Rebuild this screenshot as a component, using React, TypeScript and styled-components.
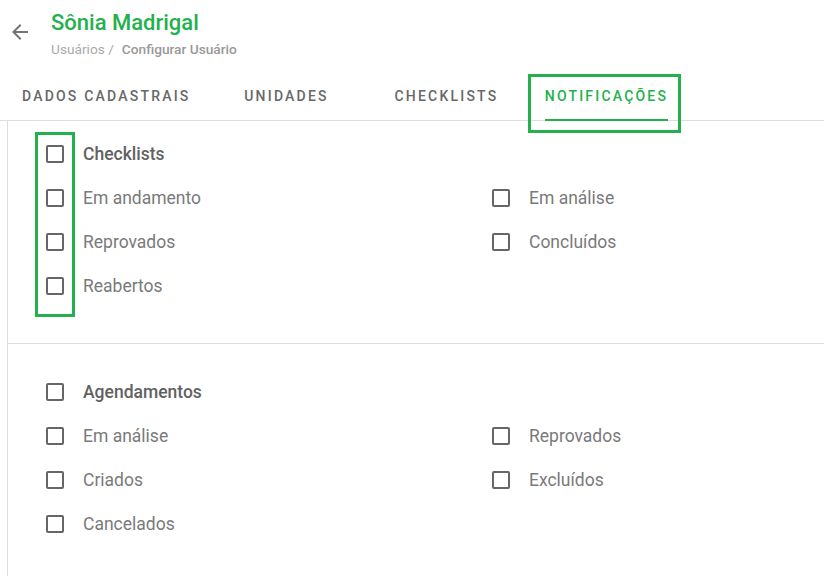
import React from 'react';
import styled, { createGlobalStyle } from 'styled-components';

const GREEN = '#22b14c';

const GlobalStyle = createGlobalStyle`
  body {
    margin: 0;
    background: #fff;
    font-family: Roboto, 'Liberation Sans', sans-serif;
  }
`;

const Page = styled.div`
  width: 824px;
  height: 578px;
  overflow: hidden;
  background: #fff;
`;

const Header = styled.header`
  display: flex;
  align-items: flex-start;
  height: 72px;
  padding: 10px 0 0 8px;
  box-sizing: border-box;
`;

const BackButton = styled.button`
  display: flex;
  align-items: center;
  justify-content: center;
  width: 24px;
  height: 24px;
  padding: 0;
  margin-top: 10px;
  border: none;
  background: none;
  color: #757575;
  cursor: pointer;
`;

const TitleBlock = styled.div`
  display: flex;
  flex-direction: column;
  margin-left: 19px;
`;

const Title = styled.h1`
  margin: 0;
  font-size: 22px;
  font-weight: 500;
  line-height: 26px;
  color: ${GREEN};
`;

const Crumbs = styled.div`
  margin-top: 5px;
  font-size: 13.7px;
  line-height: 16px;
  color: #aaa;
`;

const CrumbCurrent = styled.span`
  margin-left: 8px;
  color: #999;
  font-weight: 500;
`;

const TabBar = styled.nav`
  display: flex;
  height: 48px;
  border-bottom: 1px solid #ddd;
`;

const Tab = styled.div<{ $active?: boolean }>`
  position: relative;
  display: flex;
  align-items: flex-start;
  justify-content: center;
  width: 160px;
  box-sizing: border-box;
  font-size: 14px;
  font-weight: 500;
  letter-spacing: 2.2px;
  color: ${(p) => (p.$active ? GREEN : '#686868')};

  &:first-child {
    width: auto;
    padding: 0 16px 0 22px;
  }
`;

const TabLabel = styled.span<{ $active?: boolean }>`
  display: flex;
  align-items: center;
  height: calc(100% + 1px);
  padding-top: 1px;
  border-bottom: 2px solid ${(p) => (p.$active ? GREEN : 'transparent')};
  box-sizing: border-box;
`;

const Highlight = styled.div`
  position: absolute;
  border: 3px solid ${GREEN};
  box-sizing: border-box;
  pointer-events: none;
`;

const Panel = styled.main`
  margin-left: 7px;
  border-left: 1px solid #ddd;
`;

const Section = styled.section<{ $top: number; $bottom: number; $divider?: boolean }>`
  position: relative;
  display: grid;
  grid-template-columns: 446px 1fr;
  padding: ${(p) => p.$top}px 0 ${(p) => p.$bottom}px 38px;
  border-bottom: ${(p) => (p.$divider ? '1px solid #ddd' : 'none')};
`;

const Option = styled.label<{ $heading?: boolean }>`
  display: flex;
  align-items: center;
  gap: 19px;
  height: 44px;
  font-size: 17.5px;
  font-weight: ${(p) => (p.$heading ? 500 : 400)};
  color: ${(p) => (p.$heading ? '#616161' : '#7a7a7a')};
  grid-column: ${(p) => (p.$heading ? '1 / span 2' : 'auto')};
`;

const Box = styled.span`
  width: 18px;
  height: 18px;
  border: 2px solid #666;
  border-radius: 2px;
  box-sizing: border-box;
  flex-shrink: 0;
`;

const Empty = styled.div``;

const ArrowBack = () => (
  <svg width="24" height="24" viewBox="0 0 24 24" fill="currentColor">
    <path d="M20 11H7.83l5.59-5.59L12 4l-8 8 8 8 1.41-1.41L7.83 13H20v-2z" />
  </svg>
);

const Check = ({ label, heading }: { label: string; heading?: boolean }) => (
  <Option $heading={heading}>
    <Box />
    {label}
  </Option>
);

const tabs = ['DADOS CADASTRAIS', 'UNIDADES', 'CHECKLISTS', 'NOTIFICAÇÕES'];

export default function App() {
  return (
    <Page>
      <GlobalStyle />
      <Header>
        <BackButton aria-label="Voltar">
          <ArrowBack />
        </BackButton>
        <TitleBlock>
          <Title>Sônia Madrigal</Title>
          <Crumbs>
            Usuários /<CrumbCurrent>Configurar Usuário</CrumbCurrent>
          </Crumbs>
        </TitleBlock>
      </Header>

      <TabBar>
        {tabs.map((t, i) => {
          const active = i === tabs.length - 1;
          return (
            <Tab key={t} $active={active}>
              <TabLabel $active={active}>{t}</TabLabel>
              {active && (
                <Highlight style={{ left: 2, top: 2, width: 153, height: 59 }} />
              )}
            </Tab>
          );
        })}
      </TabBar>

      <Panel>
        <Section $top={11} $bottom={35} $divider>
          <Check label="Checklists" heading />
          <Check label="Em andamento" />
          <Check label="Em análise" />
          <Check label="Reprovados" />
          <Check label="Concluídos" />
          <Check label="Reabertos" />
          <Empty />
          <Highlight style={{ left: 27, top: 11, width: 40, height: 185 }} />
        </Section>
        <Section $top={26} $bottom={30}>
          <Check label="Agendamentos" heading />
          <Check label="Em análise" />
          <Check label="Reprovados" />
          <Check label="Criados" />
          <Check label="Excluídos" />
          <Check label="Cancelados" />
          <Empty />
        </Section>
      </Panel>
    </Page>
  );
}
